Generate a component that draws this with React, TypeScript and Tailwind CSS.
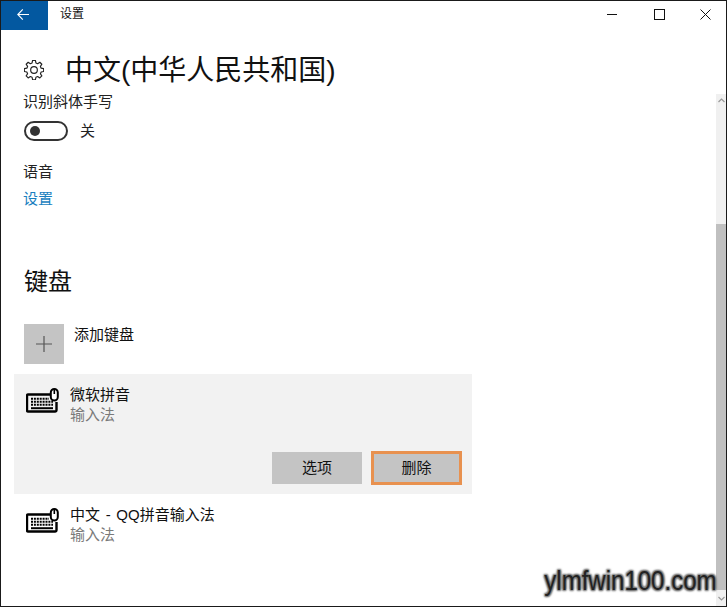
import React from "react";

const font = "[font-family:'Liberation_Sans','Noto_Sans_CJK_SC',sans-serif]";

function KeyboardIcon() {
  return (
    <svg width="33" height="25" viewBox="0 0 33 25" fill="none" className="shrink-0">
      <path d="M24 6.500H2.200A1.200 1.200 0 0 0 1 7.700V22.300a1.200 1.200 0 0 0 1.200 1.200h27.100a1.200 1.200 0 0 0 1.200-1.200V14" stroke="#000" strokeWidth="2.400" />
      <rect x="24.800" y="1" width="7" height="11.500" rx="3.500" fill="#fff" stroke="#000" strokeWidth="2" />
      <path d="M28.300 2v4" stroke="#000" strokeWidth="1.600" />
      <path d="M5 10.800h18M5 13.800h22M5 16.800h22" stroke="#000" strokeWidth="2" strokeDasharray="2 .9" />
      <path d="M5 20.200h22" stroke="#000" strokeWidth="2" />
    </svg>
  );
}

function InputMethod({ name, panel }: { name: string; panel?: boolean }) {
  return (
    <div className={panel ? "flex gap-[11px] pl-3 pt-[14px]" : "ml-[13px] flex gap-[11px] pl-3 pt-[14px]"}>
      <KeyboardIcon />
      <div className="-mt-[3px]">
        <div className="text-[15px] leading-[20px] text-[#111] [word-spacing:1.500px]">{name}</div>
        <div className="text-[15px] leading-[20px] text-[#7a7a7a]">输入法</div>
      </div>
    </div>
  );
}

export default function App() {
  return (
    <div className={`relative flex h-[607px] w-[727px] flex-col overflow-hidden border border-[#1a1a1a] bg-white ${font}`}>
      <header className="flex h-[29px] shrink-0 items-start">
        <div className="flex h-[29px] w-[47px] items-center justify-center bg-[#0358a0] pb-[3px] pr-[3px]">
          <svg width="12" height="11" viewBox="0 0 12 11" fill="none" stroke="#fff" strokeWidth="1.100">
            <path d="M12 5.500H.8M5.800.4.800 5.500l5 5.100" />
          </svg>
        </div>
        <div className="ml-[12px] text-[12px] leading-[26px] text-[#111]">设置</div>
        <div className="ml-auto flex h-[26px] items-center pr-[15px]">
          <svg width="11" height="11" viewBox="0 0 11 11" className="mr-[36px]">
            <path d="M0 5.500h10" stroke="#111" strokeWidth="1" />
          </svg>
          <svg width="11" height="11" viewBox="0 0 11 11" fill="none" className="mr-[35px]">
            <rect x="0.500" y="0.500" width="10" height="10" stroke="#111" />
          </svg>
          <svg width="11" height="11" viewBox="0 0 11 11" fill="none">
            <path d="M.5.500l10 10M10.500.500l-10 10" stroke="#111" />
          </svg>
        </div>
      </header>

      <div className="flex min-h-0 flex-1">
        <main className="flex-1">
          <div className="mt-[22px] flex h-[38px] items-center pl-[23px]">
            <svg width="20" height="20" viewBox="0 0 24 24" fill="none" stroke="#222" strokeWidth="1.400" strokeLinejoin="round" className="-mt-[2px] shrink-0">
              <path d="M10.300 1.500h3.400l.6 3 2.100.9 2.600-1.700 2.400 2.400-1.700 2.600.9 2.100 3 .6v3.400l-3 .6-.9 2.100 1.700 2.600-2.400 2.400-2.600-1.700-2.100.9-.6 3h-3.400l-.6-3-2.100-.9-2.600 1.700-2.400-2.400 1.700-2.600-.9-2.100-3-.6v-3.400l3-.6.9-2.100-1.700-2.600 2.400-2.400 2.600 1.700 2.100-.9z" transform="translate(0 -1)" />
              <circle cx="12" cy="12" r="4" />
            </svg>
            <h1 className="ml-[21px] text-[28px] font-normal leading-[38px] text-[#111]">中文(中华人民共和国)</h1>
          </div>

          <div className="mt-[2px] pl-[22px] text-[15px] leading-[20px] text-[#222]">识别斜体手写</div>
          <div className="mt-[9px] flex items-center pl-[23px]">
            <div className="flex h-[20px] w-[44px] items-center rounded-full border-2 border-[#333] pl-[4px]">
              <div className="h-[10px] w-[10px] rounded-full bg-[#333]" />
            </div>
            <span className="ml-[12px] text-[15px] leading-[20px] text-[#222]">关</span>
          </div>

          <div className="mt-[21px] pl-[22px] text-[15px] leading-[20px] text-[#222]">语音</div>
          <div className="mt-[7px] pl-[22px] text-[15px] leading-[20px] text-[#1a7fc0]">设置</div>

          <h2 className="mt-[57px] pl-[23px] text-[24px] font-normal leading-[32px] text-[#111]">键盘</h2>

          <div className="mt-[26px] flex pl-[23px]">
            <div className="flex h-[40px] w-[40px] items-center justify-center bg-[#c4c4c4]">
              <svg width="16" height="16" viewBox="0 0 16 16">
                <path d="M8 0v16M0 8h16" stroke="#555" strokeWidth="1.200" />
              </svg>
            </div>
            <div className="-mt-[1px] ml-[10px] pt-[2px] text-[15px] leading-[20px] text-[#111]">添加键盘</div>
          </div>

          <div className="ml-[13px] mt-[10px] h-[120px] w-[458px] bg-[#f2f2f2]">
            <InputMethod name="微软拼音" panel />
            <div className="mt-[26px] flex items-center justify-end gap-[9px] pr-[10px]">
              <button className="h-[32px] w-[90px] bg-[#c4c4c4] text-[15px] text-[#111]">选项</button>
              <button className="h-[34px] w-[91px] border-[3px] border-[#e8914f] bg-[#c4c4c4] text-[15px] text-[#111]">删除</button>
            </div>
          </div>

          <InputMethod name="中文 - QQ拼音输入法" />
        </main>

        <aside className="mt-[64px] flex w-[10px] shrink-0 flex-col">
          <div className="flex h-[130px] justify-center bg-[#f0f0f0] pt-[4px]">
            <svg width="7" height="5" viewBox="0 0 7 5" fill="none" stroke="#999" strokeWidth="1.200">
              <path d="M.5 4 3.500 1l3 3" />
            </svg>
          </div>
          <div className="flex-1 bg-[#c0c0c0]" />
          <div className="flex h-[16px] justify-center bg-[#f0f0f0] pt-[6px]">
            <svg width="7" height="5" viewBox="0 0 7 5" fill="none" stroke="#999" strokeWidth="1.200">
              <path d="M.5 1l3 3 3-3" />
            </svg>
          </div>
        </aside>
      </div>

      <div className="absolute bottom-[5px] right-[9px] origin-right scale-x-[0.89] text-[27px] leading-[40px] text-[#222] [font-family:'Liberation_Sans',sans-serif] [text-shadow:0_0_2px_#777,1px_1px_2px_#777,-1px_-1px_2px_#777,1px_-1px_2px_#777,-1px_1px_2px_#777]">
        ylmfwin100.com
      </div>
    </div>
  );
}
